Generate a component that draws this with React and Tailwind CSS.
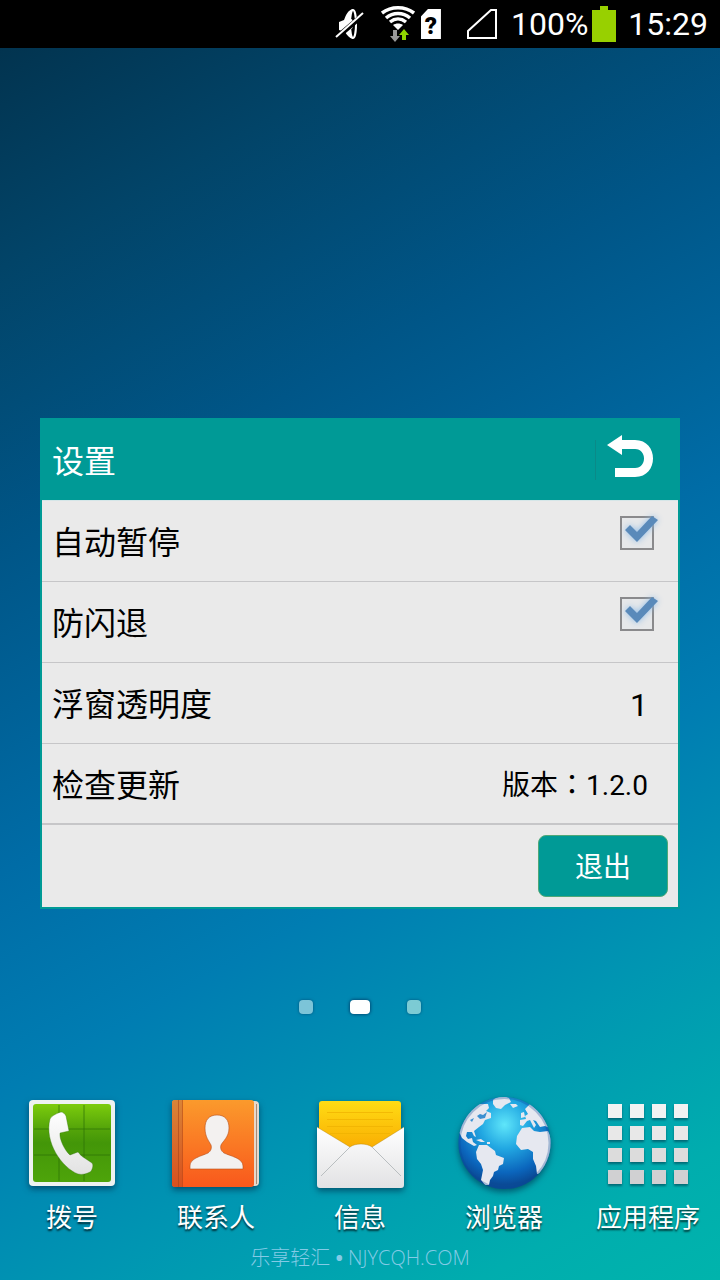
import { useState } from 'react';

const PhoneIcon = () => (
  <svg viewBox="0 0 96 96" className="h-24 w-24 drop-shadow-[0_3px_3px_rgba(0,30,60,0.55)]" aria-hidden="true">
    <defs>
      <linearGradient id="phoneGreen" x1="0" y1="0" x2="0" y2="1">
        <stop offset="0" stopColor="#7ccc0c" />
        <stop offset="0.3" stopColor="#56a60a" />
        <stop offset="0.5" stopColor="#439608" />
        <stop offset="1" stopColor="#4ea40a" />
      </linearGradient>
      <linearGradient id="phoneWhite" x1="0" y1="0" x2="0" y2="1">
        <stop offset="0" stopColor="#ffffff" />
        <stop offset="1" stopColor="#e2e2e2" />
      </linearGradient>
    </defs>
    <rect x="5" y="4" width="86" height="86" rx="4" fill="#eef2f0" />
    <rect x="9" y="8" width="78" height="78" rx="3" fill="url(#phoneGreen)" />
    <path d="M35 9v76M60 9v76M10 33h76M10 59h76" stroke="#2c6f05" strokeOpacity="0.7" strokeWidth="1" />
    <path
      d="M26 23c2-4 8-6 11-7 2 0 4 2 5 4l3 15-9 2c-1 6 5 18 10 22l8-3c2 2 3 4 5 5l9 6c2 2 0 8-2 9-4 2-8 3-12 2C38 72 20 46 26 23z"
      fill="url(#phoneWhite)"
      stroke="#2c6f05"
      strokeOpacity="0.35"
    />
  </svg>
);

const ContactsIcon = () => (
  <svg viewBox="0 0 96 96" className="h-24 w-24 drop-shadow-[0_3px_3px_rgba(0,30,60,0.55)]" aria-hidden="true">
    <defs>
      <linearGradient id="bookOrange" x1="0" y1="0" x2="0" y2="1">
        <stop offset="0" stopColor="#fb9a2c" />
        <stop offset="1" stopColor="#f9581c" />
      </linearGradient>
      <linearGradient id="bookSpine" x1="0" y1="0" x2="0" y2="1">
        <stop offset="0" stopColor="#d98437" />
        <stop offset="1" stopColor="#d8501e" />
      </linearGradient>
    </defs>
    <rect x="12" y="5" width="79" height="85" rx="4" fill="#e6d9cd" />
    <path d="M88.5 8v80" stroke="#a98a76" strokeWidth="1" />
    <rect x="4" y="4" width="82" height="87" rx="3" fill="url(#bookOrange)" />
    <path d="M14 4H7a3 3 0 0 0-3 3v81a3 3 0 0 0 3 3h7z" fill="url(#bookSpine)" />
    <path d="M10.5 4v87M14.5 4v87" stroke="#a8431a" strokeOpacity="0.6" strokeWidth="1" />
    <path
      d="M49 19c-8 0-12 5-12 13 0 9 4 13 6 17 1 3 0 6-3 8-6 3-18 5-18 13v3h53v-3c0-8-13-10-19-13-3-2-4-5-3-8 2-4 8-8 8-17 0-8-4-13-12-13z"
      fill="#f3f1f0"
      stroke="#b8501a"
      strokeOpacity="0.6"
    />
  </svg>
);

const MessageIcon = () => (
  <svg viewBox="0 0 96 96" className="h-24 w-24 drop-shadow-[0_3px_3px_rgba(0,30,60,0.55)]" aria-hidden="true">
    <defs>
      <linearGradient id="paperYellow" x1="0" y1="0" x2="0" y2="1">
        <stop offset="0" stopColor="#ffdc14" />
        <stop offset="1" stopColor="#f9a800" />
      </linearGradient>
      <linearGradient id="envelopeWhite" x1="0" y1="0" x2="0" y2="1">
        <stop offset="0" stopColor="#ffffff" />
        <stop offset="1" stopColor="#e2e2e4" />
      </linearGradient>
    </defs>
    <rect x="7" y="5" width="82" height="52" rx="3" fill="url(#paperYellow)" />
    <path d="M15 16.5h66M15 23.5h66M15 30.5h66M18 37.5h60" stroke="#eeb000" strokeOpacity="0.7" strokeWidth="1" />
    <path d="M5 31l33 20c5-4 17-4 22 0l32-20v58a3 3 0 0 1-3 3H8a3 3 0 0 1-3-3z" fill="url(#envelopeWhite)" />
    <path d="M5 31l33 20c5-4 17-4 22 0l32-20" fill="none" stroke="#b07d00" strokeOpacity="0.4" />
    <path d="M38 51L9 80M60 51l29 29" stroke="#b9bec0" strokeWidth="1" />
  </svg>
);

const GlobeIcon = () => (
  <svg viewBox="0 0 96 96" className="h-24 w-24 drop-shadow-[0_3px_3px_rgba(0,30,60,0.55)]" aria-hidden="true">
    <defs>
      <radialGradient id="ocean" cx="0.5" cy="0.3" r="0.65">
        <stop offset="0" stopColor="#5fe6fa" />
        <stop offset="0.4" stopColor="#22a8e2" />
        <stop offset="0.8" stopColor="#0b66bd" />
        <stop offset="1" stopColor="#0a4a96" />
      </radialGradient>
      <clipPath id="globeClip">
        <circle cx="48.500" cy="47" r="46" />
      </clipPath>
    </defs>
    <circle cx="48.500" cy="47" r="46" fill="url(#ocean)" />
    <g clipPath="url(#globeClip)" fill="#e6e8f0">
      {/* americas */}
      <path d="M0 30L16 8l16 0 1 4-3 3 5 2v5l-6 2-2 4-4 3-5 4 2 6-2-1-2-4-5 0-1 4 2 3 4-1 1 4 4 3-3 1-7-4-5-4-4-8z" />
      <path d="M23 49l8 0 4 3 4 3 1 4 8 3-1 6-4 2-1 4-4 2-1 4-3 4-1 5-4 0-4-5 2-10-2-6-4-5-1-7z" />
      <path d="M20 44l5-1 4 3-4 0zM31 46l3 0 0 2-3 0z" />
      <path d="M37 4c3-3 10-5 16-2l2 4-6 3-4 4-5-1-3-4z" />
      {/* europe and africa */}
      <path d="M54 8l6 0 2 2-5 2zM65 17l3-1 1 5-4 1z" />
      <path d="M64 29v-5l6-1-1-3 3-2-3-5 6-6 9 4 12 22-7-3-5 1-4-6-3-1 3 5-2 3-4-8-3 1-4 5z" />
      <path d="M66 32l8-1 4 4 6 1 8-1 5 10-4 20-7 12-5 1-1-8-3-7v-7l-5-3-7 1-5-6 1-8z" />
    </g>
    <path d="M24 18l3 1 4-3-2 6-5 1-3-3zM14 24l4-2-2 4z" fill="#3b8fd0" />
    <circle cx="48.500" cy="47" r="45" fill="none" stroke="#0a4a96" strokeOpacity="0.3" strokeWidth="2" />
  </svg>
);

const APP_CELLS = [8, 30, 52, 74];
const APP_FILLS = ['#f2f2f2', '#e8e8e8', '#dcdcdc', '#d0d0d2'];

const AppsIcon = () => (
  <svg viewBox="0 0 96 96" className="h-24 w-24 drop-shadow-[0_2px_1px_rgba(0,40,60,0.5)]" aria-hidden="true">
    {APP_CELLS.map((y, row) =>
      APP_CELLS.map(x => (
        <rect key={`${x}-${y}`} x={x} y={y} width="14" height="14" fill={APP_FILLS[row]} />
      ))
    )}
  </svg>
);

const DOCK = [
  { label: '拨号',     Icon: PhoneIcon },
  { label: '联系人',   Icon: ContactsIcon },
  { label: '信息',     Icon: MessageIcon },
  { label: '浏览器',   Icon: GlobeIcon },
  { label: '应用程序', Icon: AppsIcon }
];

const StatusBar = () => (
  <header className="flex h-12 items-center justify-end bg-black pr-3 text-[32px] leading-[48px] text-white">
    {/* muted */}
    <svg viewBox="0 0 32 34" className="mr-[14px] h-[34px] w-8" aria-label="静音">
      <path d="M4 15l5-2c2-5 4-10 9-11v30c-4-1-6-4-8-7l-6-2z" fill="#fff" />
      <ellipse cx="18" cy="17" rx="3" ry="14" fill="#000" stroke="#fff" strokeWidth="2" />
      <ellipse cx="16" cy="17" rx="2" ry="5" fill="#fff" />
      <path d="M1 31L28 8" stroke="#000" strokeWidth="5" />
      <path d="M1 30L28 6" stroke="#fff" strokeWidth="2" />
    </svg>
    {/* wifi */}
    <svg viewBox="0 0 34 36" className="mr-[6px] h-9 w-[34px]" aria-label="WLAN">
      <g fill="none" stroke="#fff" strokeWidth="3.500">
        <path d="M1 7C10 0 24 0 33 7" />
        <path d="M5 12C12 6 22 6 29 12" />
        <path d="M9 16c5-4 11-4 16 0" />
      </g>
      <path d="M12 19c3-2 7-2 10 0l-5 5z" fill="#fff" />
      <path d="M12 24h4v6h3l-5 6-5-6h3z" fill="#999" />
      <path d="M21 34h4v-5h3l-5-6-5 6h3z" fill="#8fd400" />
    </svg>
    <span className="mr-[26px] flex h-[30px] w-5 items-center justify-center bg-white pt-1 text-2xl font-black text-black [clip-path:polygon(35%_0,100%_0,100%_100%,0_100%,0_25%)]">
      ?
    </span>
    {/* no signal */}
    <svg viewBox="0 0 32 32" className="mr-3 h-8 w-8" aria-label="无信号">
      <path d="M1 30V23L24 2h5v28z" fill="none" stroke="#fff" strokeWidth="2" />
    </svg>
    <span>100%</span>
    <svg viewBox="0 0 24 36" className="mr-3 ml-1 h-9 w-6" aria-label="电量">
      <path d="M0 4h8V0h8v4h8v32H0z" fill="#98d000" />
    </svg>
    <time>15:29</time>
  </header>
);

const CheckRow = ({ label, checked, onChange }) => (
  <label className="flex h-[81px] items-center justify-between border-b border-[#c6c6c8] pt-1 pr-6 pl-[10px]">
    {label}
    <span className="relative mb-5 h-[34px] w-[34px]">
      <input
        type="checkbox"
        checked={checked}
        onChange={onChange}
        className="peer block h-[34px] w-[34px] appearance-none border-2 border-[#8a8a8c] bg-[#e6e8ea]"
      />
      <svg
        viewBox="0 0 44 40"
        className="pointer-events-none invisible absolute -top-1 left-0 h-10 w-11 drop-shadow-[0_0_3px_#8fbbe6] peer-checked:visible"
        aria-hidden="true">
        <path d="M10 13l7 7L32 4l6 4-21 22L5 18z" fill="#5a8aba" />
      </svg>
    </span>
  </label>
);

const SettingsPanel = () => {
  const [autoPause, setAutoPause] = useState(true);
  const [crashGuard, setCrashGuard] = useState(true);

  return (
    <section className="mx-10 border-2 border-[#009a96] bg-[#eaeaea] text-[32px] leading-10 text-black">
      <div className="flex h-[81px] items-center border-b border-[#d5e6e8] bg-[#009a96] pr-6 pl-[10px]">
        <h1 className="flex-1 pt-1 text-white">设置</h1>
        <span className="mr-[10px] h-10 w-px bg-[#0a8a88]" />
        <button type="button" aria-label="返回" className="mb-2">
          <svg viewBox="0 0 48 44" className="h-11 w-12" aria-hidden="true">
            <path d="M1 11L16 1v5h13c24 0 24 37 0 37H9v-9h20c12 0 12-19 0-19H16v6z" fill="#fff" />
          </svg>
        </button>
      </div>

      <CheckRow label="自动暂停" checked={autoPause} onChange={() => setAutoPause(!autoPause)} />
      <CheckRow label="防闪退" checked={crashGuard} onChange={() => setCrashGuard(!crashGuard)} />

      <div className="flex h-[81px] items-center justify-between border-b border-[#c6c6c8] pt-1 pr-[30px] pl-[10px]">
        <span>浮窗透明度</span>
        <span>1</span>
      </div>
      <div className="flex h-[81px] items-center justify-between border-b-2 border-[#c6c6c8] pt-1 pr-[30px] pl-[10px]">
        <span>检查更新</span>
        {/* TC face keeps the full-width colon centred */}
        <span className="font-[Roboto,'Noto_Sans_CJK_TC',sans-serif] text-[28px]" lang="zh-TW">版本：1.2.0</span>
      </div>

      <div className="flex h-[82px] items-center justify-end pr-[10px]">
        <button
          type="button"
          className="h-[62px] w-[130px] rounded-lg border border-[#4fa878] bg-[#009a96] pt-1 text-[28px] text-white">
          退出
        </button>
      </div>
    </section>
  );
};

const App = () => (
  <div className="flex min-h-screen flex-col bg-[linear-gradient(151deg,#02304a_0%,#024468_16%,#005688_33%,#006ca6_52%,#007db2_65%,#0096b2_79%,#00adae_92%,#00b4ac_100%)] font-[Roboto,'Noto_Sans_CJK_SC',sans-serif]">
    <StatusBar />

    <main className="flex flex-1 flex-col pt-[370px]">
      <SettingsPanel />

      <div className="mt-[91px] flex justify-center gap-[37px]">
        <span className="h-[14px] w-[14px] rounded bg-[#7cc4d8] shadow-[0_0_3px_#02507a]" />
        <span className="h-[14px] w-5 rounded bg-white shadow-[0_0_3px_1px_#02507a]" />
        <span className="h-[14px] w-[14px] rounded bg-[#7ccbd4] shadow-[0_0_3px_#02507a]" />
      </div>
    </main>

    <nav className="grid grid-cols-5">
      {DOCK.map(({ label, Icon }) => (
        <a
          key={label}
          href="#"
          className="flex flex-col items-center gap-2 text-[26px] leading-9 whitespace-nowrap text-white [text-shadow:0_2px_2px_rgba(0,0,0,0.7)]">
          <Icon />
          {label}
        </a>
      ))}
    </nav>

    <footer className="mt-2 pb-2 text-center font-['Open_Sans','Noto_Sans_CJK_SC',sans-serif] text-xl leading-7 font-light text-[#84cbe6]">
      乐享轻汇 <span className="font-bold">•</span> NJYCQH.COM
    </footer>
  </div>
);

export default App;
